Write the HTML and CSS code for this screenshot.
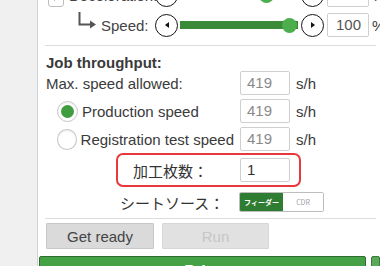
FILE: index.html
```html
<!DOCTYPE html>
<html lang="ja">
<head>
<meta charset="utf-8">
<title>Job settings</title>
<link rel="stylesheet" href="styles.css">
</head>
<body>
<div class="app">
  <div class="gutter"></div>
  <div class="panel">
    <div class="content">
      <div class="speed-rows">
        <div class="srow">
          <div class="slabel">
            <span class="check"><svg width="14" height="12" viewBox="0 0 14 12"><path d="M1.5 6.5 L5.5 10 L12.5 1.5" fill="none" stroke="#333" stroke-width="2.2"/></svg></span>
            <span>Deceleration:</span>
          </div>
          <button class="circ"><svg width="8" height="8" viewBox="0 0 8 8"><path d="M2 4 L6 1 L6 7 Z" fill="#111"/></svg></button>
          <div class="slider">
            <div class="track pale"><div class="fill pale-fill" style="width:80%"></div></div>
            <div class="thumb" style="left:81px"></div>
          </div>
          <button class="circ"><svg width="8" height="8" viewBox="0 0 8 8"><path d="M6 4 L2 1 L2 7 Z" fill="#111"/></svg></button>
          <div class="field num">50</div>
          <span class="unit">%</span>
        </div>
        <div class="srow">
          <div class="slabel sub">
            <svg class="arrow" width="20" height="18" viewBox="0 0 20 18"><path d="M2.5 0 V12.5 H14" fill="none" stroke="#555" stroke-width="2"/><path d="M13 8.5 L19 12.5 L13 16.5 Z" fill="#555"/></svg>
            <span>Speed:</span>
          </div>
          <button class="circ"><svg width="8" height="8" viewBox="0 0 8 8"><path d="M2 4 L6 1 L6 7 Z" fill="#111"/></svg></button>
          <div class="slider">
            <div class="track"><div class="fill" style="width:100%"></div></div>
            <div class="thumb" style="left:104px"></div>
          </div>
          <button class="circ"><svg width="8" height="8" viewBox="0 0 8 8"><path d="M6 4 L2 1 L2 7 Z" fill="#111"/></svg></button>
          <div class="field num">100</div>
          <span class="unit">%</span>
        </div>
      </div>

      <hr class="sep">

      <div class="title">Job throughput:</div>
      <div class="trow">
        <span class="tlabel">Max. speed allowed:</span>
        <span class="field dis">419</span>
        <span class="unit">s/h</span>
      </div>
      <div class="trow">
        <span class="tlabel radio-label"><span class="radio on"></span>Production speed</span>
        <span class="field dis">419</span>
        <span class="unit">s/h</span>
      </div>
      <div class="trow">
        <span class="tlabel radio-label"><span class="radio"></span>Registration test speed</span>
        <span class="field dis">419</span>
        <span class="unit">s/h</span>
      </div>

      <div class="redbox">
        <span class="jlabel">加工枚数：</span>
        <span class="field val">1</span>
      </div>

      <div class="sheetrow">
        <span class="jlabel2">シートソース：</span>
        <div class="toggle">
          <span class="tg on">フィーダー</span>
          <span class="tg off">CDR</span>
        </div>
      </div>

      <hr class="sep sep2">

      <div class="buttons">
        <button class="btn">Get ready</button>
        <button class="btn disabled">Run</button>
      </div>
    </div>
    <div class="footer">
      <div class="go">Print</div>
      <div class="next"></div>
    </div>
  </div>
</div>
</body>
</html>
```

FILE: styles.css
```css
* { box-sizing: border-box; }

html, body {
  margin: 0;
  padding: 0;
  width: 380px;
  height: 266px;
  overflow: hidden;
  background: #f0f0f0;
  font-family: "Liberation Sans", Arial, "Noto Sans CJK JP", sans-serif;
  font-size: 15px;
  color: #3a3a3a;
}

.app {
  display: flex;
  height: 266px;
}

.gutter {
  width: 37px;
  flex-shrink: 0;
  background: #f0f0f0;
}

.panel {
  flex: 1;
  background: #fff;
  border-left: 1px solid #d2d2d2;
  display: flex;
  flex-direction: column;
  min-width: 0;
}

.content {
  padding: 0 4px 0 8px;
}

/* speed rows */
.speed-rows {
  margin-top: -17px;
  display: flex;
  flex-direction: column;
  gap: 6px;
}

.srow {
  display: flex;
  align-items: center;
  height: 24px;
  white-space: nowrap;
}

.srow > * { flex-shrink: 0; }

.slabel {
  width: 109px;
  display: flex;
  align-items: center;
  gap: 5px;
  padding-left: 2px;
  color: #444;
}

.slabel.sub {
  padding-left: 31px;
  gap: 4px;
}

.arrow {
  margin-top: -9px;
}

.check {
  width: 24px;
  height: 24px;
  border: 1px solid #bdbdbd;
  border-radius: 3px;
  background: #fff;
  display: flex;
  align-items: center;
  justify-content: center;
}

.circ {
  width: 23px;
  height: 23px;
  padding: 0;
  margin: 0;
  border: 1.5px solid #151515;
  border-radius: 50%;
  background: #fff;
  display: flex;
  align-items: center;
  justify-content: center;
}

.slider {
  position: relative;
  width: 123px;
  height: 24px;
}

.track {
  position: absolute;
  left: 2px;
  right: 3px;
  top: 8px;
  height: 8px;
  background: #e2e2e2;
}

.track.pale { background: #e6efe5; }

.fill {
  height: 100%;
  background: #3b8a37;
}

.fill.pale-fill { background: #c9e4c6; }

.thumb {
  position: absolute;
  top: 4.5px;
  width: 15px;
  height: 15px;
  border-radius: 50%;
  background: #4cae4c;
}

.field {
  display: block;
  height: 24px;
  border: 1px solid #cfcfcf;
  border-radius: 2px;
  background: #fff;
  line-height: 22px;
  padding-left: 6px;
}

.field.num {
  width: 42px;
  margin-left: 3px;
  padding-left: 8px;
  color: #555;
}

.unit {
  margin-left: 3px;
  color: #3a3a3a;
}

.sep {
  border: 0;
  border-top: 1px solid #dcdcdc;
  margin: 8px 0 0 -1px;
  height: 0;
}

.title {
  font-weight: bold;
  line-height: 17px;
  margin-top: 8px;
  color: #3a3a3a;
}

.trow {
  display: grid;
  grid-template-columns: 188px 50px auto;
  column-gap: 6px;
  align-items: center;
  height: 24px;
  margin-bottom: 4px;
  white-space: nowrap;
}

.trow .unit { margin-left: 0; }

.field.dis { color: #8a8a8a; }

.radio-label {
  display: flex;
  align-items: center;
  gap: 4px;
  padding-left: 11px;
}

.radio {
  width: 21px;
  height: 21px;
  border-radius: 50%;
  border: 1px solid #c6c6c6;
  background: #fff;
  display: flex;
  align-items: center;
  justify-content: center;
  box-shadow: inset 0 1px 2px rgba(0,0,0,0.08);
}

.radio.on::after {
  content: "";
  width: 13px;
  height: 13px;
  border-radius: 50%;
  background: #3f9c3f;
}

.redbox {
  margin: -2px 0 0 70px;
  width: 185px;
  border: 2px solid #e8383b;
  border-radius: 7px;
  padding: 3px 0;
  display: grid;
  grid-template-columns: 122px 50px;
  align-items: center;
}

.jlabel {
  padding-left: 15px;
  color: #333;
}

.field.val { color: #333; }

.sheetrow {
  display: grid;
  grid-template-columns: 119px 85px;
  align-items: center;
  height: 24px;
  margin: 3px 0 0 74px;
}

.jlabel2 { color: #333; }

.toggle {
  display: flex;
  height: 20px;
  border: 1px solid #bdbdbd;
  border-radius: 2px;
  overflow: hidden;
}

.tg {
  display: flex;
  align-items: center;
  justify-content: center;
  font-size: 7px;
  font-family: "Noto Sans CJK JP", sans-serif;
}

.tg.on {
  width: 43px;
  background: #2f7d32;
  color: #fff;
  font-weight: bold;
}

.tg.off {
  flex: 1;
  background: #fff;
  color: #a0a0a0;
}

.sep2 { margin-top: 4px; }

.buttons {
  display: flex;
  gap: 8px;
  margin-top: 4px;
}

.btn {
  height: 26px;
  width: 108px;
  margin: 0;
  padding: 0;
  background: #dadada;
  border: 1px solid #c8c8c8;
  border-radius: 1px;
  font-family: "Liberation Sans", Arial, sans-serif;
  font-size: 15px;
  color: #444;
}

.btn.disabled {
  width: 107px;
  background: #e1e1e1;
  border-color: #d6d6d6;
  color: #c6c6c6;
}

.footer {
  display: flex;
  gap: 5px;
  margin-top: 7px;
  padding-left: 1px;
}

.go {
  width: 327px;
  height: 30px;
  background: #45a145;
  border: 1px solid #2e6e2e;
  border-radius: 2px;
  color: #fff;
  font-weight: bold;
  font-size: 16px;
  text-align: center;
  padding-top: 6px;
}

.next {
  flex: 1;
  height: 30px;
  background: #5aa95a;
  border: 1px solid #3a7a3a;
  border-radius: 2px;
}
```
